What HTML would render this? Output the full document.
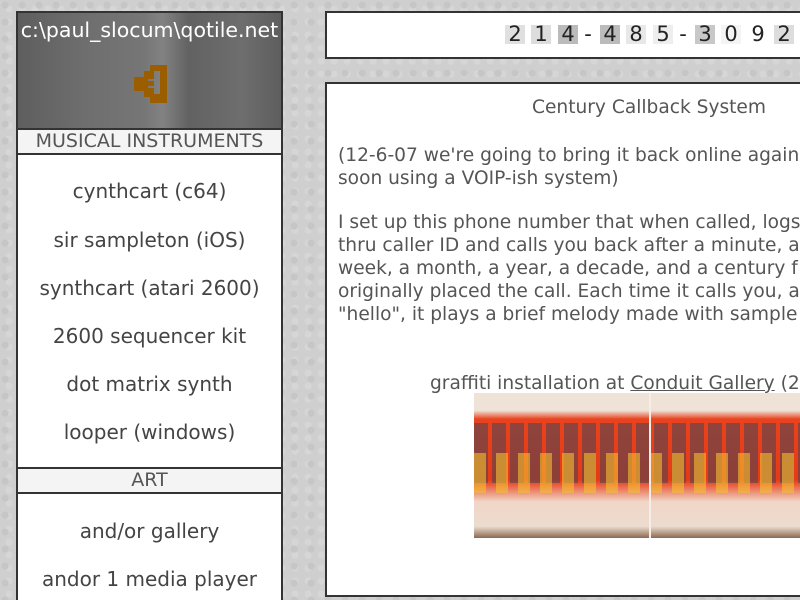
<!DOCTYPE html>
<html style="height:600px;overflow:hidden"><head><meta charset="utf-8"><style>
body{margin:0;width:800px;height:600px;overflow:hidden;position:relative;background:#cfcfcf;font-family:"DejaVu Sans","Liberation Sans",sans-serif;color:#555;
background-image:radial-gradient(circle at 30% 30%,#c6c6c6 0 3px,transparent 4px),radial-gradient(circle at 70% 70%,#d6d6d6 0 3px,transparent 4px);background-size:17px 17px,13px 13px;}
.abs{position:absolute}
#left{left:16px;top:11px;width:263px;height:600px;border:2px solid #333;background:#fff}
#hdr{left:0;top:0;width:263px;height:115px;
background-image:linear-gradient(90deg,#5e5e5e,#6e6e6e 25%,#767676 48%,#828282 55%,#626262 65%,#6e6e6e 85%,#5e5e5e);color:#fff;font-size:20.5px;text-align:center;line-height:34px;white-space:nowrap}
.band{left:0;width:263px;height:23px;background:#f4f4f4;border-top:2px solid #333;border-bottom:2px solid #333;text-align:center;font-size:19px;line-height:23px;color:#555;white-space:nowrap}
.it{left:0;width:263px;text-align:center;font-size:20px;color:#444;white-space:nowrap}
#phone{left:325px;top:11px;width:475px;height:44px;border:2px solid #333;border-right:none;background:#fff}
.d{position:absolute;top:12px;width:20px;height:19px;font-size:21px;line-height:19px;text-align:center;color:#222}
#main{left:325px;top:82px;width:475px;height:511px;border:2px solid #333;border-right:none;background:#fff;overflow:hidden}
.t{font-size:18.6px;line-height:23px;color:#555;white-space:nowrap}
</style></head><body>
<div id="left" class="abs">
 <div id="hdr" class="abs">c:\paul_slocum\qotile.net
  <svg class="abs" style="left:116px;top:52px" width="33" height="38" viewBox="0 0 33 38"><path fill="#9a5e00" d="M16 0h17v38H16v-6h-6v-6H0V12h10V6h6zM20 6v8H14v2h6v5h-6v2h6v6h6V6z"/></svg>
 </div>
 <div class="band abs" style="top:115px">MUSICAL INSTRUMENTS</div>
 <div class="it abs" style="top:166px">cynthcart (c64)</div>
 <div class="it abs" style="top:215px">sir sampleton (iOS)</div>
 <div class="it abs" style="top:263px">synthcart (atari 2600)</div>
 <div class="it abs" style="top:311px">2600 sequencer kit</div>
 <div class="it abs" style="top:359px">dot matrix synth</div>
 <div class="it abs" style="top:407px">looper (windows)</div>
 <div class="band abs" style="top:454px">ART</div>
 <div class="it abs" style="top:506px">and/or gallery</div>
 <div class="it abs" style="top:554px">andor 1 media player</div>
</div>
<div id="phone" class="abs">
 <div class="d" style="left:178px;background:#e0e0e0">2</div>
 <div class="d" style="left:204px;background:#ddd">1</div>
 <div class="d" style="left:231px;background:#bbb">4</div>
 <div class="d" style="left:254px;width:14px">-</div>
 <div class="d" style="left:273px;background:#bbb">4</div>
 <div class="d" style="left:299px;background:#e8e8e8">8</div>
 <div class="d" style="left:326px;background:#eee">5</div>
 <div class="d" style="left:349px;width:14px">-</div>
 <div class="d" style="left:368px;background:#c8c8c8">3</div>
 <div class="d" style="left:394px;background:#f4f4f4">0</div>
 <div class="d" style="left:421px">9</div>
 <div class="d" style="left:447px;background:#ddd">2</div>
</div>
<div id="main" class="abs">
 <div class="abs t" style="left:205px;top:12px">Century Callback System</div>
 <div class="abs t" style="left:11px;top:60px">(12-6-07 we're going to bring it back online again<br>soon using a VOIP-ish system)</div>
 <div class="abs t" style="left:11px;top:127px">I set up this phone number that when called, logs<br>thru caller ID and calls you back after a minute, a<br>week, a month, a year, a decade, and a century f<br>originally placed the call. Each time it calls you, a<br>"hello", it plays a brief melody made with sample</div>
 <div class="abs t" style="left:103px;top:288px">graffiti installation at <u>Conduit Gallery</u> (2</div>
 <div class="abs" style="left:147px;top:309px;width:330px;height:145px;background:linear-gradient(180deg,#efe3d8 0,#efe3d8 12%,#e8431e 18%,#e63a15 60%,#f0d6c6 75%,#ecdccf 92%,#8a6a50 100%)">
  <div class="abs" style="left:0;top:30px;width:330px;height:60px;background:repeating-linear-gradient(90deg,#445 0 14px,transparent 14px 18px);opacity:.55"></div>
  <div class="abs" style="left:0;top:60px;width:330px;height:40px;background:repeating-linear-gradient(90deg,#f4c030 0 12px,transparent 12px 22px);opacity:.6"></div>
  <div class="abs" style="left:175px;top:0;width:2px;height:145px;background:#f6eee6"></div>
 </div>
</div>
</body></html>
